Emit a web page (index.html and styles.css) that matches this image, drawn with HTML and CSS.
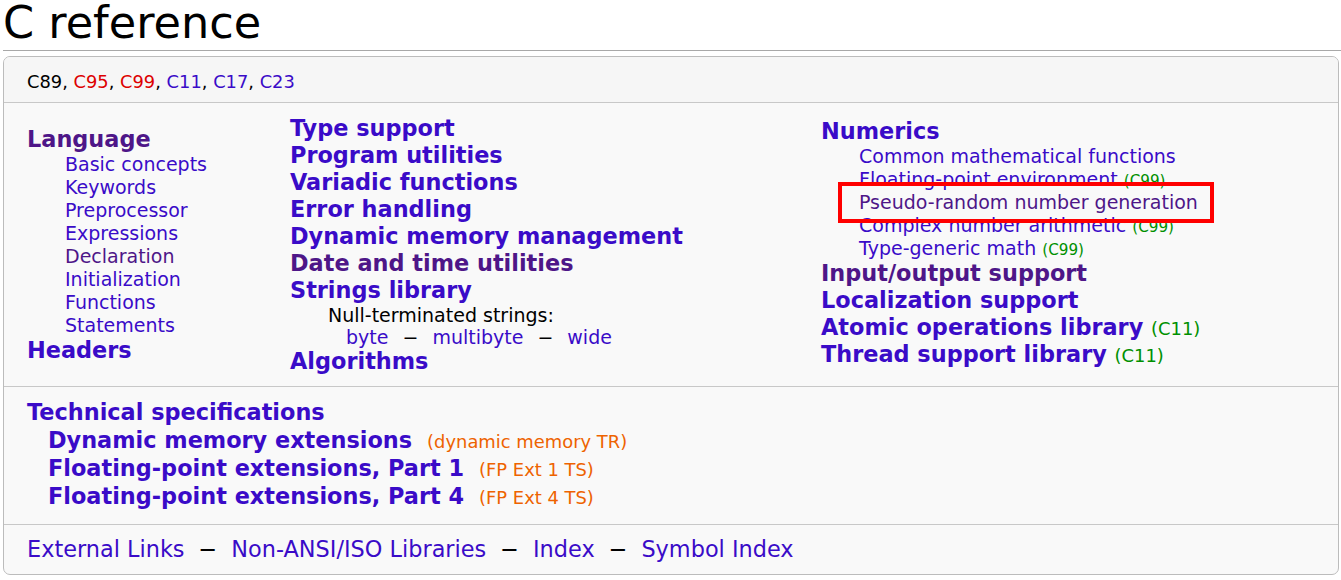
FILE: index.html
```html
<!DOCTYPE html>
<html lang="en">
<head>
<meta charset="utf-8">
<title>C reference</title>
<link rel="stylesheet" href="styles.css">
</head>
<body>
<h1 class="title">C reference</h1>
<div class="mainbox">
  <div class="row versions">
    <span class="v-plain">C89</span>, <a class="v-red" href="#">C95</a>, <a class="v-red" href="#">C99</a>, <a href="#">C11</a>, <a href="#">C17</a>, <a href="#">C23</a>
  </div>
  <div class="row cols">
    <div class="col">
      <div class="head"><a class="visited" href="#">Language</a></div>
      <div class="item"><a href="#">Basic concepts</a></div>
      <div class="item"><a href="#">Keywords</a></div>
      <div class="item"><a href="#">Preprocessor</a></div>
      <div class="item"><a href="#">Expressions</a></div>
      <div class="item"><a class="visited" href="#">Declaration</a></div>
      <div class="item"><a href="#">Initialization</a></div>
      <div class="item"><a href="#">Functions</a></div>
      <div class="item"><a href="#">Statements</a></div>
      <div class="head"><a href="#">Headers</a></div>
    </div>
    <div class="col">
      <div class="head"><a href="#">Type support</a></div>
      <div class="head"><a href="#">Program utilities</a></div>
      <div class="head"><a href="#">Variadic functions</a></div>
      <div class="head"><a href="#">Error handling</a></div>
      <div class="head"><a href="#">Dynamic memory management</a></div>
      <div class="head"><a class="visited" href="#">Date and time utilities</a></div>
      <div class="head"><a href="#">Strings library</a></div>
      <div class="item small-line">Null-terminated strings:</div>
      <div class="item deep small-line"><a href="#">byte</a><span class="sep">−</span><a href="#">multibyte</a><span class="sep">−</span><a href="#">wide</a></div>
      <div class="head"><a href="#">Algorithms</a></div>
    </div>
    <div class="col col3">
      <div class="head"><a href="#">Numerics</a></div>
      <div class="item"><a href="#">Common mathematical functions</a></div>
      <div class="item"><a href="#">Floating-point environment</a> <span class="mark">(C99)</span></div>
      <div class="item"><a class="visited highlight" href="#">Pseudo-random number generation</a></div>
      <div class="item"><a href="#">Complex number arithmetic</a> <span class="mark">(C99)</span></div>
      <div class="item"><a href="#">Type-generic math</a> <span class="mark">(C99)</span></div>
      <div class="head"><a class="visited" href="#">Input/output support</a></div>
      <div class="head"><a href="#">Localization support</a></div>
      <div class="head"><a href="#">Atomic operations library</a> <span class="mark">(C11)</span></div>
      <div class="head"><a href="#">Thread support library</a> <span class="mark">(C11)</span></div>
    </div>
  </div>
  <div class="row tech">
    <div class="tline"><a href="#">Technical specifications</a></div>
    <div class="tline tsub"><a href="#">Dynamic memory extensions</a><span class="mark ts">(dynamic memory TR)</span></div>
    <div class="tline tsub"><a href="#">Floating-point extensions, Part 1</a><span class="mark ts">(FP Ext 1 TS)</span></div>
    <div class="tline tsub"><a href="#">Floating-point extensions, Part 4</a><span class="mark ts">(FP Ext 4 TS)</span></div>
  </div>
  <div class="row footer">
    <a href="#">External Links</a><span class="sep">−</span><a href="#">Non-ANSI/ISO Libraries</a><span class="sep">−</span><a href="#">Index</a><span class="sep">−</span><a href="#">Symbol Index</a>
  </div>
</div>
</body>
</html>
```

FILE: styles.css
```css
html, body {
  background: #ffffff;
}

body {
  margin: 0 0 0 3px;
  font-family: "DejaVu Sans", "Noto Sans", sans-serif;
  color: #000000;
}

a {
  color: #3a0bc8;
  text-decoration: none;
}

a.visited {
  color: #4e1688;
}

.title {
  margin: 0;
  font-size: 44.6px;
  font-weight: normal;
  line-height: 46px;
  padding-bottom: 4px;
  border-bottom: 1px solid #a8a8a8;
}

.mainbox {
  margin-top: 5px;
  width: 1336px;
  box-sizing: border-box;
  border: 1px solid #bcbcbc;
  border-radius: 7px;
  background: #f9f9f9;
  overflow: hidden;
}

.row {
  padding-left: 23px;
  padding-right: 23px;
  border-bottom: 1px solid #c8c8c8;
}

.row:last-child {
  border-bottom: none;
}

.versions {
  background: #f6f6f6;
  padding-top: 14px;
  padding-bottom: 10px;
  font-size: 17.85px;
  line-height: 21px;
}

.v-plain {
  color: #000000;
}

a.v-red {
  color: #dd0000;
}

.cols {
  display: grid;
  grid-template-columns: 263px 531px 1fr;
  align-items: center;
  padding-top: 12px;
  padding-bottom: 11px;
}

.col3 {
  margin-top: -4px;
}

.head {
  font-size: 22.4px;
  line-height: 27px;
  font-weight: bold;
}

.item {
  font-size: 19px;
  line-height: 23px;
  padding-left: 38px;
}

.item.small-line {
  line-height: 22px;
}

.item.deep {
  padding-left: 56px;
}

.sep {
  margin: 0 14px;
  color: #000000;
}

.mark {
  font-size: 0.8em;
  line-height: 1;
  font-weight: normal;
  color: #009000;
}

.mark.ts {
  color: #ee6300;
  margin-left: 15px;
}

.highlight {
  position: relative;
}

.highlight::after {
  content: "";
  position: absolute;
  left: -21px;
  right: -16px;
  top: -9px;
  bottom: -10px;
  border: 4px solid #ff0000;
}

.tech {
  padding-top: 11px;
  padding-bottom: 14px;
}

.tline {
  font-size: 22.4px;
  line-height: 28px;
  font-weight: bold;
}

.tsub {
  padding-left: 21px;
}

.footer {
  font-size: 22.4px;
  line-height: 26px;
  padding-top: 11px;
  padding-bottom: 12px;
}
```
